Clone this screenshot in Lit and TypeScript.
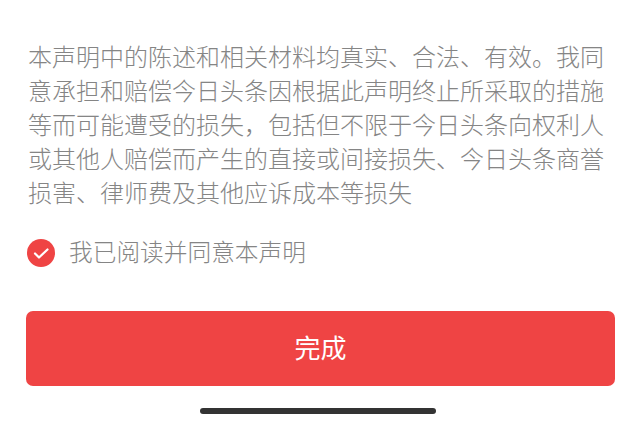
import { LitElement, html, css } from "lit";
import { customElement } from "lit/decorators.js";

@customElement("app-root")
export class AppRoot extends LitElement {
  static styles = css`
    :host { display: block; width: 640px; height: 424px; background: #fff; overflow: hidden; position: relative; font-family: "Noto Sans CJK SC", "Liberation Sans", sans-serif; }
    .page { display: flex; flex-direction: column; padding: 39px 25px 0 26px; }
    .text { margin: 0 0 0 2px; width: 580px; font-size: 24px; font-weight: 300; line-height: 34px; color: #858585; }
    .agree { display: flex; align-items: center; gap: 14px; margin: 26px 0 0 1px; font-size: 23.7px; font-weight: 300; line-height: 36px; color: #858585; }
    .agree svg { width: 28px; height: 28px; display: block; margin-top: 1px; }
    .agree span { margin-top: -2px; }
    .btn { margin-top: 42px; width: 589px; height: 75px; border-radius: 7px; background: #ef4444; color: #fff; font-size: 26px; display: flex; align-items: center; justify-content: center; padding-bottom: 4px; box-sizing: border-box; }
    .home { position: absolute; left: 200px; top: 408px; width: 236px; height: 6px; border-radius: 3px; background: #333; }
  `;
  render() {
    return html`<div class="page">
      <p class="text">本声明中的陈述和相关材料均真实、合法、有效。我同意承担和赔偿今日头条因根据此声明终止所采取的措施等而可能遭受的损失，包括但不限于今日头条向权利人或其他人赔偿而产生的直接或间接损失、今日头条商誉损害、律师费及其他应诉成本等损失</p>
      <div class="agree">
        <svg viewBox="0 0 28 28"><circle cx="14" cy="14" r="14" fill="#ef4444"/><path d="M8 14.5l4 4 8.5-8" fill="none" stroke="#fff" stroke-width="2.2" stroke-linecap="round" stroke-linejoin="round"/></svg>
        <span>我已阅读并同意本声明</span>
      </div>
      <div class="btn">完成</div>
    </div><div class="home"></div>`;
  }
}
